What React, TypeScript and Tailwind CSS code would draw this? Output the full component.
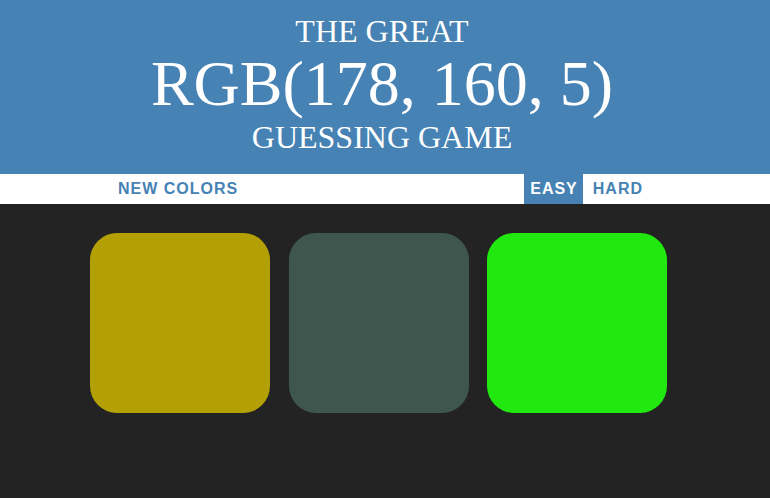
const squares = ["#b2a005", "#3f564f", "#21e80f"];

export default function App() {
  return (
    <div className="min-h-screen bg-[#232323]">
      <div className="bg-[#4682b4] text-white text-center font-['Liberation_Serif',serif] font-normal uppercase pt-[14px] pr-[6px] h-[174px]">
        <div className="text-[32px] leading-[1.1]">The Great</div>
        <div className="text-[64px] leading-[1.1]">RGB(178, 160, 5)</div>
        <div className="text-[32px] leading-[1.1]">Guessing Game</div>
      </div>
      <div className="bg-white h-[30px] flex font-['Liberation_Sans',Arial,sans-serif] font-bold text-[16px] tracking-[1px] uppercase pl-[112px]">
        <button className="h-full px-[6px] uppercase text-[#4682b4]">New Colors</button>
        <span className="w-[280px]"></span>
        <button className="h-full pl-[6px] pr-[5px] uppercase text-white bg-[#4682b4]">Easy</button>
        <button className="h-full px-[6px] ml-[4px] uppercase text-[#4682b4]">Hard</button>
      </div>
      <div className="flex gap-[18.5px] pl-[90px] pt-[29px]">
        {squares.map((c) => (
          <div key={c} className="w-[180px] h-[180px] rounded-[27px]" style={{ backgroundColor: c }} />
        ))}
      </div>
    </div>
  );
}
